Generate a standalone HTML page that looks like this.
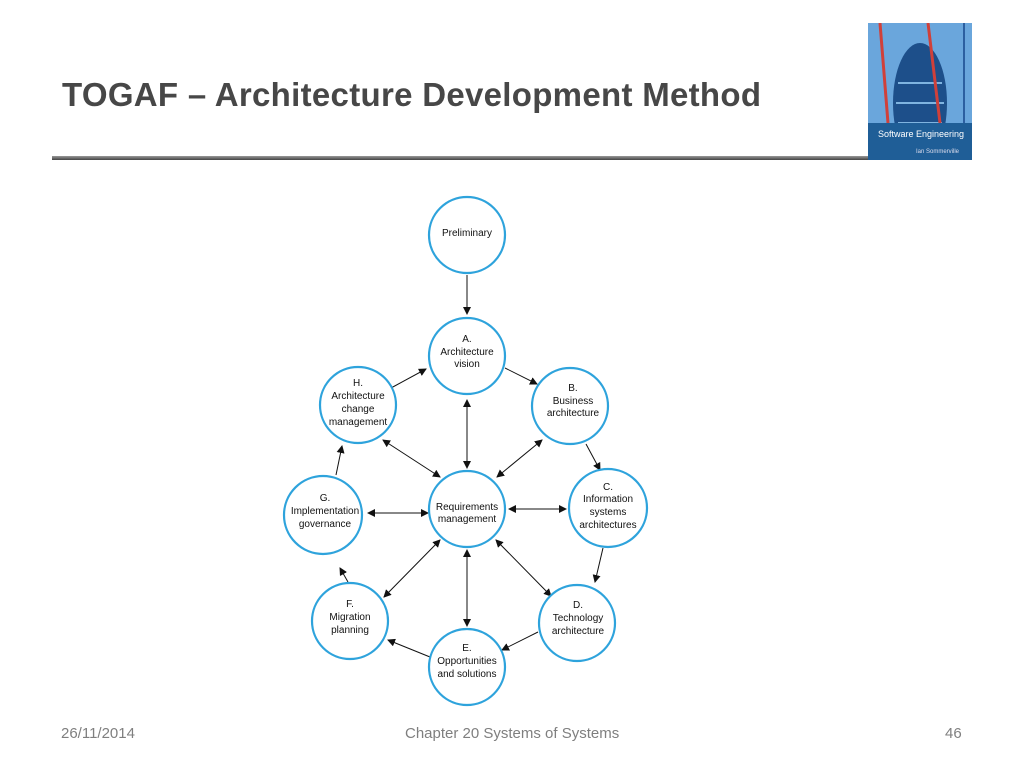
<!DOCTYPE html>
<html><head><meta charset="utf-8"><style>
body{margin:0;width:1024px;height:768px;background:#fff;position:relative;overflow:hidden;font-family:"Liberation Sans",sans-serif}
.t{position:absolute;left:62px;top:76px;font-size:33px;font-weight:bold;color:#474747;letter-spacing:0.3px}
.rule{position:absolute;left:52px;top:156px;width:820px;height:4px;background:linear-gradient(#999,#444)}
.f{position:absolute;top:725px;font-size:15px;color:#7f7f7f}
</style></head><body>
<div class="t">TOGAF – Architecture Development Method</div>
<div class="rule"></div>
<svg style="position:absolute;left:868px;top:23px" width="104" height="137">
<rect width="104" height="137" fill="#4a8cc8"/>
<rect y="0" width="104" height="100" fill="#6aa6dc"/>
<ellipse cx="52" cy="80" rx="27" ry="60" fill="#1d4f8a"/>
<path d="M30 60 L74 60 M28 80 L76 80 M30 100 L74 100" stroke="#7fb4e0" stroke-width="2"/>
<path d="M12 0 L20 100 M60 0 L72 100" stroke="#d0403a" stroke-width="3"/>
<path d="M96 0 L96 100" stroke="#2c5fa0" stroke-width="2"/>
<rect y="100" width="104" height="37" fill="#1f5e97"/>
<text x="10" y="114" font-size="9" fill="#fff" font-family="Liberation Sans">Software Engineering</text>
<text x="48" y="130" font-size="6" fill="#dde">Ian Sommerville</text>
</svg>
<svg style="position:absolute;left:0;top:0" width="1024" height="768" font-family="Liberation Sans" font-size="10" text-anchor="middle">
<defs><marker id="a" markerWidth="8" markerHeight="8" refX="7" refY="4" orient="auto-start-reverse" markerUnits="userSpaceOnUse"><path d="M0,0 L8,4 L0,8 z" fill="#111"/></marker></defs>
<g stroke="#111" stroke-width="1" fill="none">
<line x1="467" y1="275" x2="467" y2="314" marker-end="url(#a)"/>
<line x1="505" y1="368" x2="537" y2="384" marker-end="url(#a)"/>
<line x1="391" y1="388" x2="426" y2="369" marker-end="url(#a)"/>
<line x1="467" y1="400" x2="467" y2="468" marker-start="url(#a)" marker-end="url(#a)"/>
<line x1="542" y1="440" x2="497" y2="477" marker-start="url(#a)" marker-end="url(#a)"/>
<line x1="383" y1="440" x2="440" y2="477" marker-start="url(#a)" marker-end="url(#a)"/>
<line x1="586" y1="444" x2="600" y2="470" marker-end="url(#a)"/>
<line x1="509" y1="509" x2="566" y2="509" marker-start="url(#a)" marker-end="url(#a)"/>
<line x1="368" y1="513" x2="428" y2="513" marker-start="url(#a)" marker-end="url(#a)"/>
<line x1="336" y1="475" x2="342" y2="446" marker-end="url(#a)"/>
<line x1="440" y1="540" x2="384" y2="597" marker-start="url(#a)" marker-end="url(#a)"/>
<line x1="496" y1="540" x2="551" y2="596" marker-start="url(#a)" marker-end="url(#a)"/>
<line x1="467" y1="550" x2="467" y2="626" marker-start="url(#a)" marker-end="url(#a)"/>
<line x1="603" y1="548" x2="595" y2="582" marker-end="url(#a)"/>
<line x1="538" y1="632" x2="502" y2="650" marker-end="url(#a)"/>
<line x1="430" y1="657" x2="388" y2="640" marker-end="url(#a)"/>
<line x1="348" y1="582" x2="340" y2="568" marker-end="url(#a)"/>
</g>
<g fill="#fff" stroke="#2ea3dc" stroke-width="2.2">
<circle cx="467" cy="235" r="38"/><circle cx="467" cy="356" r="38"/><circle cx="570" cy="406" r="38"/>
<circle cx="358" cy="405" r="38"/><circle cx="323" cy="515" r="39"/><circle cx="467" cy="509" r="38"/>
<circle cx="608" cy="508" r="39"/><circle cx="350" cy="621" r="38"/><circle cx="577" cy="623" r="38"/>
<circle cx="467" cy="667" r="38"/>
</g>
<g fill="#111">
<text x="467" y="236">Preliminary</text>
<text x="467" y="342">A.</text><text x="467" y="355">Architecture</text><text x="467" y="367">vision</text>
<text x="573" y="391">B.</text><text x="573" y="404">Business</text><text x="573" y="416">architecture</text>
<text x="358" y="386">H.</text><text x="358" y="399">Architecture</text><text x="358" y="412">change</text><text x="358" y="425">management</text>
<text x="325" y="501">G.</text><text x="325" y="514">Implementation</text><text x="325" y="527">governance</text>
<text x="467" y="510">Requirements</text><text x="467" y="522">management</text>
<text x="608" y="490">C.</text><text x="608" y="502">Information</text><text x="608" y="515">systems</text><text x="608" y="528">architectures</text>
<text x="350" y="607">F.</text><text x="350" y="620">Migration</text><text x="350" y="633">planning</text>
<text x="578" y="608">D.</text><text x="578" y="621">Technology</text><text x="578" y="634">architecture</text>
<text x="467" y="651">E.</text><text x="467" y="664">Opportunities</text><text x="467" y="677">and solutions</text>
</g>
</svg>
<div class="f" style="left:61px">26/11/2014</div>
<div class="f" style="left:405px">Chapter 20 Systems of Systems</div>
<div class="f" style="left:945px">46</div>
</body></html>
